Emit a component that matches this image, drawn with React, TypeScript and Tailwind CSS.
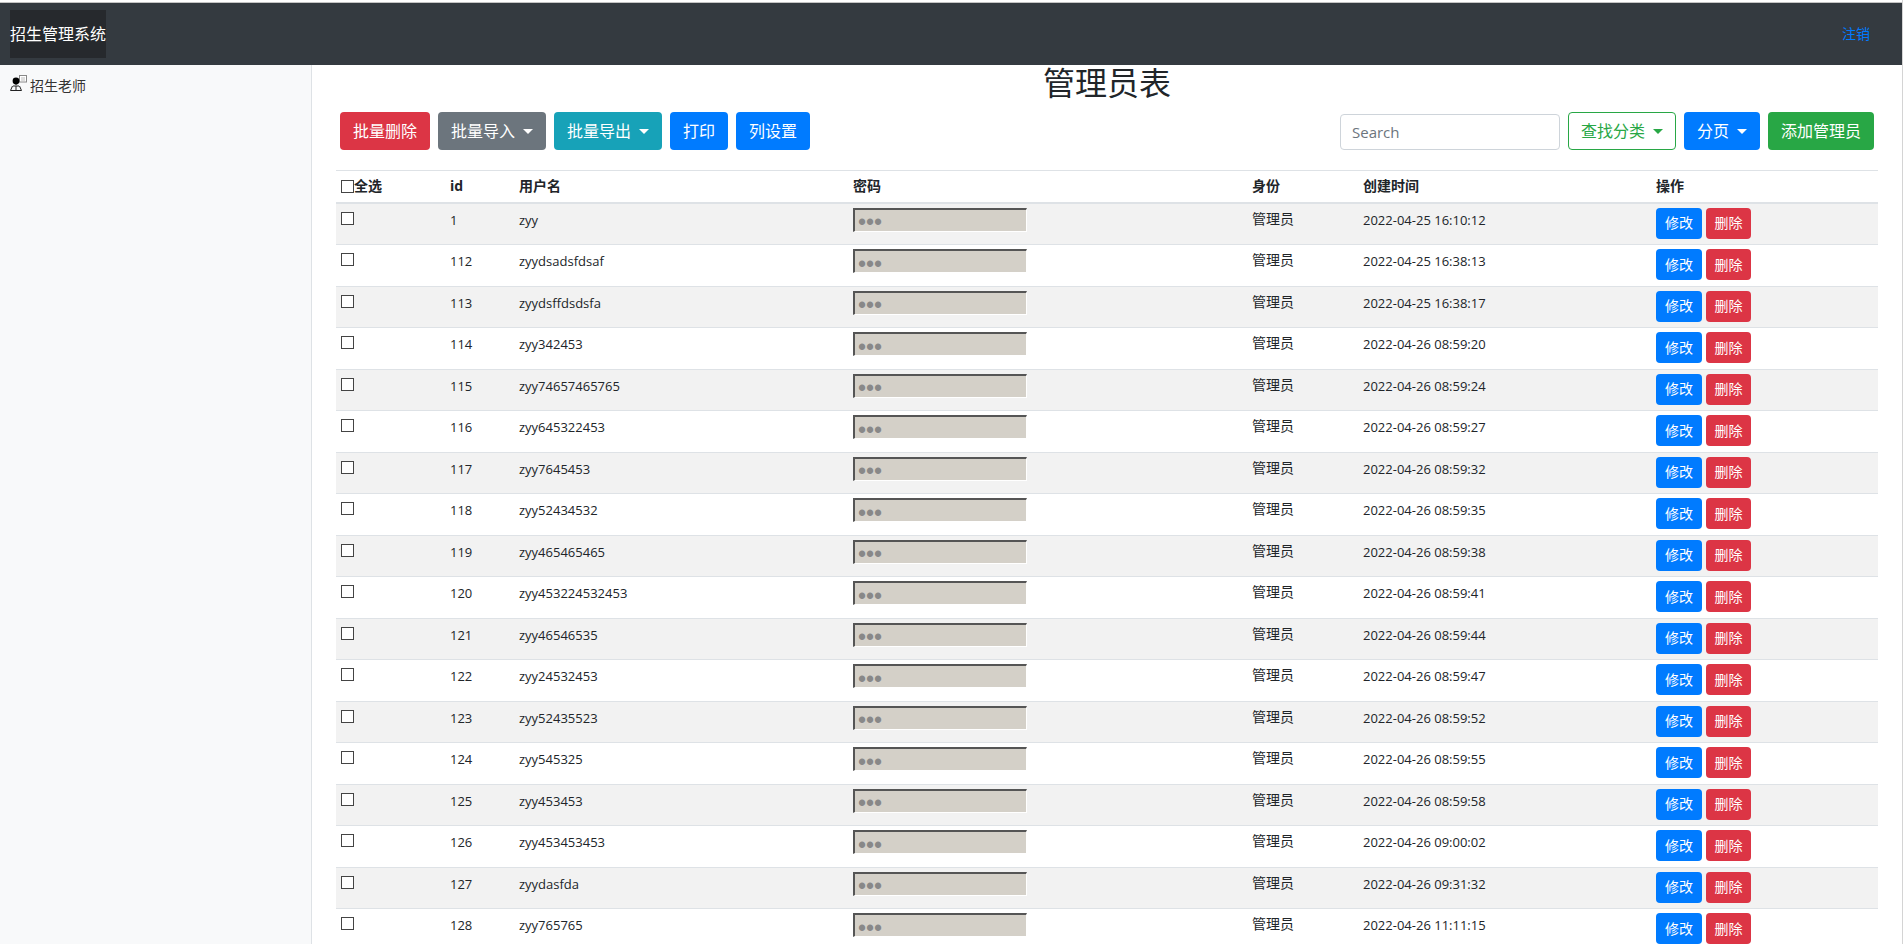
const sans = '"Open Sans", "Noto Sans CJK SC", sans-serif';

const rows = [
  ['1', 'zyy', '2022-04-25 16:10:12'],
  ['112', 'zyydsadsfdsaf', '2022-04-25 16:38:13'],
  ['113', 'zyydsffdsdsfa', '2022-04-25 16:38:17'],
  ['114', 'zyy342453', '2022-04-26 08:59:20'],
  ['115', 'zyy74657465765', '2022-04-26 08:59:24'],
  ['116', 'zyy645322453', '2022-04-26 08:59:27'],
  ['117', 'zyy7645453', '2022-04-26 08:59:32'],
  ['118', 'zyy52434532', '2022-04-26 08:59:35'],
  ['119', 'zyy465465465', '2022-04-26 08:59:38'],
  ['120', 'zyy453224532453', '2022-04-26 08:59:41'],
  ['121', 'zyy46546535', '2022-04-26 08:59:44'],
  ['122', 'zyy24532453', '2022-04-26 08:59:47'],
  ['123', 'zyy52435523', '2022-04-26 08:59:52'],
  ['124', 'zyy545325', '2022-04-26 08:59:55'],
  ['125', 'zyy453453', '2022-04-26 08:59:58'],
  ['126', 'zyy453453453', '2022-04-26 09:00:02'],
  ['127', 'zyydasfda', '2022-04-26 09:31:32'],
  ['128', 'zyy765765', '2022-04-26 11:11:15'],
];

const Caret = () => (
  <span className="ml-[8px] inline-block align-[3px] border-x-[5px] border-t-[5px] border-x-transparent border-t-current" />
);

const TeacherIcon = () => (
  <svg width="17" height="17" viewBox="0 0 17 17" className="shrink-0">
    <rect x="9.5" y="0.5" width="7" height="6.5" fill="#fff" stroke="#888" />
    <path d="M11 3h4M11 5h4" stroke="#bbb" />
    <circle cx="6" cy="6" r="3.4" fill="#000" />
    <path d="M6 9v1M3 11h6M2.5 11l-2 4.5h11l-2-4.5M6 11v4.5" fill="none" stroke="#222" />
  </svg>
);

const Box = () => <span className="block w-[13px] h-[13px] border border-[#444] bg-white" />;

export default function App() {
  return (
    <div className="h-[944px] w-[1904px] overflow-hidden bg-white text-[#212529] flex" style={{ fontFamily: sans }}>
      <div className="w-[1902px] shrink-0">
        <div className="h-[3px] border-b border-[#c4c4c4]" />
        <header className="h-[62px] bg-[#343a40] flex items-center justify-between pl-[10px] pr-[32px]">
          <div className="h-[48px] w-[96px] bg-[#26292d] text-white text-base flex items-center">招生管理系统</div>
          <a className="text-sm text-[#007bff]">注销</a>
        </header>
        <div className="flex">
          <aside className="w-[312px] h-[879px] bg-[#f8f9fa] border-r border-[#dee2e6] pl-[10px] pt-[10px] shrink-0">
            <div className="flex items-start gap-[3px] text-sm text-[#333]">
              <TeacherIcon />
              <span className="mt-[1px]">招生老师</span>
            </div>
          </aside>
          <main className="flex-1 pl-[24px] pr-[24px]">
            <h2 className="text-center text-[32px] leading-[38px] font-normal h-[48px] -mt-[1px]">管理员表</h2>
            <div className="flex justify-between pl-[4px] pr-[4px] h-[58px]">
              <div className="flex gap-[8px] text-white text-base">
                <button className="h-[38px] px-[13px] rounded bg-[#dc3545]">批量删除</button>
                <button className="h-[38px] px-[13px] rounded bg-[#6c757d]">批量导入<Caret /></button>
                <button className="h-[38px] px-[13px] rounded bg-[#17a2b8]">批量导出<Caret /></button>
                <button className="h-[38px] px-[13px] rounded bg-[#007bff]">打印</button>
                <button className="h-[38px] px-[13px] rounded bg-[#007bff]">列设置</button>
              </div>
              <div className="flex gap-[8px] text-white text-base">
                <input
                  placeholder="Search"
                  className="mt-[2px] h-[36px] w-[220px] rounded border border-[#ced4da] px-[11px] text-[15px] placeholder:text-[#6c757d]"
                />
                <button className="h-[38px] w-[108px] rounded border border-[#28a745] text-[#28a745]">查找分类<Caret /></button>
                <button className="h-[38px] w-[76px] rounded bg-[#007bff]">分页<Caret /></button>
                <button className="h-[38px] w-[106px] rounded bg-[#28a745]">添加管理员</button>
              </div>
            </div>
            <table className="w-[1542px] table-fixed border-collapse text-sm">
              <colgroup>
                <col className="w-[109px]" />
                <col className="w-[69px]" />
                <col className="w-[334px]" />
                <col className="w-[399px]" />
                <col className="w-[111px]" />
                <col className="w-[293px]" />
                <col className="w-[227px]" />
              </colgroup>
              <thead>
                <tr className="border-t border-[#dee2e6] border-b-2 border-b-[#dee2e6] h-[32px] text-left">
                  <th className="px-[5px] font-bold">
                    <span className="flex items-center"><Box /><span>全选</span></span>
                  </th>
                  <th className="px-[5px] font-bold">id</th>
                  <th className="px-[5px] font-bold">用户名</th>
                  <th className="px-[5px] font-bold">密码</th>
                  <th className="px-[5px] font-bold">身份</th>
                  <th className="px-[5px] font-bold">创建时间</th>
                  <th className="px-[5px] font-bold">操作</th>
                </tr>
              </thead>
              <tbody>
                {rows.map((r, i) => (
                  <tr key={r[0]} className={`border-b border-[#dee2e6] ${i % 2 === 0 ? 'bg-[#f2f2f2]' : 'bg-white'}`}>
                    <td className={`${i === 0 ? 'h-[42px]' : 'h-[41.5px]'} px-[5px] pt-[8px] align-top`}><Box /></td>
                    <td className="px-[5px] pt-[6px] align-top text-[13px] leading-[21px]">{r[0]}</td>
                    <td className="px-[5px] pt-[6px] align-top text-[13px] leading-[21px]">{r[1]}</td>
                    <td className="px-[5px] pt-[4px] align-top">
                      <input
                        type="password"
                        readOnly
                        value="123"
                        className="block h-[24px] w-[174px] bg-[#d4d0c8] border-t-2 border-l-2 border-r border-b border-t-[#555] border-l-[#555] border-r-white border-b-white pl-[3px] pt-[5px] leading-none text-[23px] font-['Liberation_Sans'] text-[#888]"
                      />
                    </td>
                    <td className="px-[5px] pt-[4px] align-top leading-[21px]">管理员</td>
                    <td className="px-[5px] pt-[6px] align-top text-[13px] leading-[21px]">{r[2]}</td>
                    <td className="px-[5px] pt-[4px] align-top">
                      <div className="flex gap-[4px] text-white">
                        <button className="h-[31px] w-[46px] rounded bg-[#007bff]">修改</button>
                        <button className="h-[31px] w-[45px] rounded bg-[#dc3545]">删除</button>
                      </div>
                    </td>
                  </tr>
                ))}
              </tbody>
            </table>
          </main>
        </div>
      </div>
      <div className="w-px shrink-0 bg-[#d4d4d4]" />
    </div>
  );
}
